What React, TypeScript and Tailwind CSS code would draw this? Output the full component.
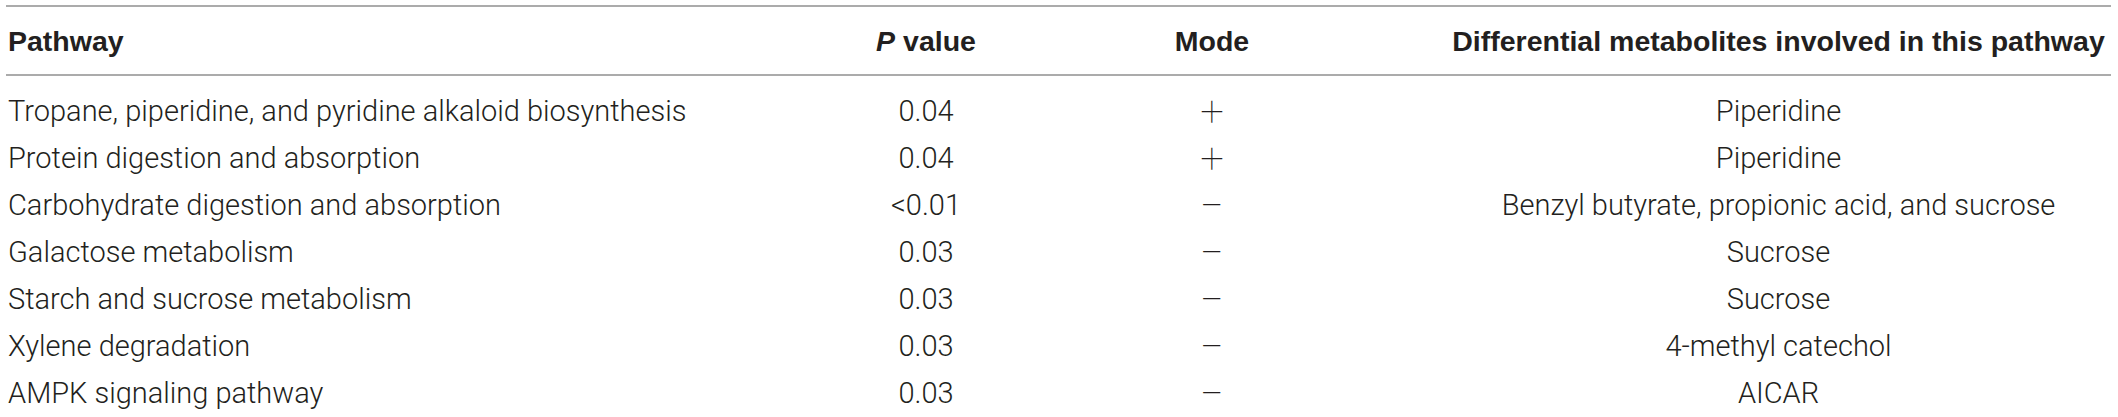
import React from 'react';

const rows = [
  ['Tropane, piperidine, and pyridine alkaloid biosynthesis', '0.04', '+', 'Piperidine'],
  ['Protein digestion and absorption', '0.04', '+', 'Piperidine'],
  ['Carbohydrate digestion and absorption', '<0.01', '\u2212', 'Benzyl butyrate, propionic acid, and sucrose'],
  ['Galactose metabolism', '0.03', '\u2212', 'Sucrose'],
  ['Starch and sucrose metabolism', '0.03', '\u2212', 'Sucrose'],
  ['Xylene degradation', '0.03', '\u2212', '4-methyl catechol'],
  ['AMPK signaling pathway', '0.03', '\u2212', 'AICAR'],
];

const cols = 'grid grid-cols-[868px_104px_468px_665px]';

export default function App() {
  return (
    <div className="w-[2118px] h-[417px] overflow-hidden bg-white pt-[5px] pl-[6px]">
      <div className="w-[2105px] text-[#231f20]">
        <div className={`${cols} h-[71px] border-y-2 border-[#ababab] items-center font-['Liberation_Sans',Arial,sans-serif] font-bold text-[28.5px] leading-[69px]`}>
          <div className="pl-[2px]">Pathway</div>
          <div className="text-center whitespace-nowrap">
            <span className="italic">P</span> value
          </div>
          <div className="text-center">Mode</div>
          <div className="text-center whitespace-nowrap">Differential metabolites involved in this pathway</div>
        </div>
        <div className="pt-[12px] font-['Roboto',sans-serif] font-light text-[29px] leading-[47px]">
          {rows.map((r) => (
            <div key={r[0]} className={`${cols} h-[47px]`}>
              <div className="pl-[2px] whitespace-nowrap">{r[0]}</div>
              <div className="text-center">{r[1]}</div>
              <div className="text-center text-[42px] font-thin overflow-hidden">{r[2]}</div>
              <div className="text-center whitespace-nowrap">{r[3]}</div>
            </div>
          ))}
        </div>
      </div>
    </div>
  );
}
